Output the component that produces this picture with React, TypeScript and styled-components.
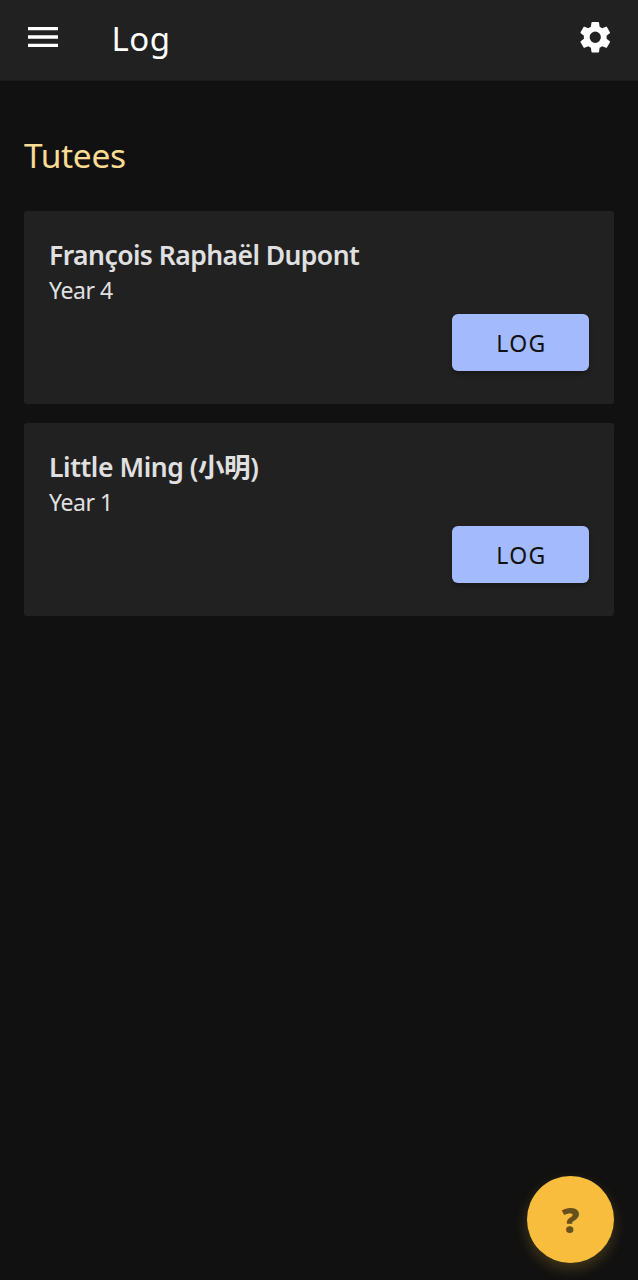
import React from 'react';
import styled, { createGlobalStyle } from 'styled-components';
import { MdMenu } from 'react-icons/md';

const Global = createGlobalStyle`
  * { box-sizing: border-box; }
  body { margin: 0; background: #111111; font-family: "Noto Sans", "Noto Sans CJK SC", sans-serif; }
`;
const Page = styled.div`
  height: 1280px;
  background: #111111;
`;
const Toolbar = styled.header`
  height: 81px;
  background: #212121;
  border-bottom: 1px solid #1b1b1b;
  color: #ffffff;
  display: flex;
  align-items: center;
  padding: 0 25px 6px 22.5px;
`;
const IconButton = styled.button`
  border: 0;
  padding: 0;
  background: none;
  color: inherit;
  display: flex;
`;
const Title = styled.h1`
  flex: 1;
  margin: 4px 0 0 49px;
  font-size: 33px;
  line-height: 44px;
  font-weight: 400;
  letter-spacing: 0.5px;
`;
const Content = styled.main`
  padding: 52px 24px 0;
`;
const Heading = styled.h2`
  margin: 0 0 34px;
  font-size: 33.5px;
  line-height: 44px;
  font-weight: 400;
  letter-spacing: -0.3px;
  color: #fadb93;
`;
const CardList = styled.div`
  display: flex;
  flex-direction: column;
  gap: 19px;
`;
const Card = styled.section`
  height: 193px;
  padding: 26px 25px 0;
  border-radius: 3px;
  background: #212121;
  color: #e0e0e0;
  display: flex;
  flex-direction: column;
`;
const Name = styled.h3<{ $spacing: number }>`
  margin: 0;
  font-size: 26.5px;
  line-height: 36px;
  font-weight: 600;
  letter-spacing: ${(p) => p.$spacing}px;
`;
const Year = styled.p`
  margin: 0;
  font-size: 23px;
  line-height: 34px;
  letter-spacing: -0.45px;
`;
const LogButton = styled.button`
  align-self: flex-end;
  width: 137px;
  height: 57px;
  margin-top: 7px;
  padding: 1px 0 0 2px;
  border: 0;
  border-radius: 6px;
  background: #a3bbfc;
  color: #111111;
  font: 400 23px "Noto Sans", sans-serif;
  letter-spacing: 1.4px;
  box-shadow: 0 3px 4px rgba(0, 0, 0, 0.25);
`;
const HelpButton = styled.button`
  position: absolute;
  left: 527px;
  top: 1176px;
  width: 87px;
  height: 87px;
  padding: 0;
  border: 0;
  border-radius: 50%;
  background: #f8bd3d;
  color: #67501c;
  font: 800 35px "Open Sans", sans-serif;
  box-shadow: 0 6px 14px rgba(248, 189, 61, 0.22);
`;

const GearIcon = () => (
  <svg width="36.5" height="36.5" viewBox="0 0 24 24" fill="currentColor">
    <path d="M12 15.7a3.7 3.7 0 1 1 0-7.4 3.7 3.7 0 0 1 0 7.4m7.43-2.73c.04-.32.07-.64.07-.97s-.03-.66-.07-1l2.11-1.63c.19-.15.24-.42.12-.64l-2-3.46c-.12-.22-.39-.31-.61-.22l-2.49 1c-.52-.39-1.06-.73-1.69-.98l-.37-2.65A.506.506 0 0 0 14 2h-4c-.25 0-.46.18-.5.42l-.37 2.65c-.63.25-1.17.59-1.69.98l-2.49-1c-.22-.09-.49 0-.61.22l-2 3.46c-.13.22-.07.49.12.64L4.57 11c-.04.34-.07.67-.07 1s.03.65.07.97l-2.11 1.66c-.19.15-.25.42-.12.64l2 3.46c.12.22.39.3.61.22l2.49-1.01c.52.4 1.06.74 1.69.99l.37 2.65c.04.24.25.42.5.42h4c.25 0 .46-.18.5-.42l.37-2.65c.63-.26 1.17-.59 1.69-.99l2.49 1.01c.22.08.49 0 .61-.22l2-3.46c.12-.22.07-.49-.12-.64z" />
  </svg>
);

const tutees = [
  { name: 'François Raphaël Dupont', year: 'Year 4', spacing: -0.56 },
  { name: 'Little Ming (小明)', year: 'Year 1', spacing: -0.42 },
];

export default function App() {
  return (
    <Page>
      <Global />
      <Toolbar>
        <IconButton aria-label="Menu"><MdMenu size={40} /></IconButton>
        <Title>Log</Title>
        <IconButton aria-label="Settings"><GearIcon /></IconButton>
      </Toolbar>
      <Content>
        <Heading>Tutees</Heading>
        <CardList>
          {tutees.map((t) => (
            <Card key={t.name}>
              <Name $spacing={t.spacing}>{t.name}</Name>
              <Year>{t.year}</Year>
              <LogButton>LOG</LogButton>
            </Card>
          ))}
        </CardList>
      </Content>
      <HelpButton aria-label="Help">?</HelpButton>
    </Page>
  );
}
